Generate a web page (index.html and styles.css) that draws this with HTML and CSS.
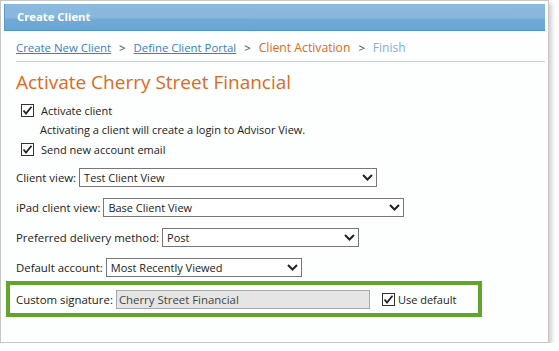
FILE: index.html
```html
<!DOCTYPE html>
<html lang="en">
<head>
    <meta charset="UTF-8">
    <title>Create Client</title>
    <link rel="stylesheet" href="styles.css">
</head>
<body>
    <div class="frame">
        <div class="header">Create Client</div>

        <div class="content">
            <div class="breadcrumb">
                <a href="#">Create New Client</a>
                <span class="sep">&gt;</span>
                <a href="#">Define Client Portal</a>
                <span class="sep">&gt;</span>
                <span class="current">Client Activation</span>
                <span class="sep">&gt;</span>
                <span class="next">Finish</span>
            </div>

            <h1>Activate Cherry Street Financial</h1>

            <div class="check-row">
                <svg class="checkbox" width="13" height="13" viewBox="0 0 13 13"><rect x="0.5" y="0.5" width="12" height="12" fill="#fff" stroke="#333"/><path d="M2.5 6.5 L5 9.5 L10.5 2.8" fill="none" stroke="#222" stroke-width="1.8"/></svg>
                <span>Activate client</span>
            </div>
            <div class="note">Activating a client will create a login to Advisor View.</div>
            <div class="check-row">
                <svg class="checkbox" width="13" height="13" viewBox="0 0 13 13"><rect x="0.5" y="0.5" width="12" height="12" fill="#fff" stroke="#333"/><path d="M2.5 6.5 L5 9.5 L10.5 2.8" fill="none" stroke="#222" stroke-width="1.8"/></svg>
                <span>Send new account email</span>
            </div>

            <div class="field">
                <label>Client view:</label>
                <div class="select w-client">
                    <span>Test Client View</span>
                    <svg width="11" height="7" viewBox="0 0 11 7"><path d="M1 1 L5.5 5.5 L10 1" fill="none" stroke="#222" stroke-width="2"/></svg>
                </div>
            </div>
            <div class="field">
                <label>iPad client view:</label>
                <div class="select w-ipad">
                    <span>Base Client View</span>
                    <svg width="11" height="7" viewBox="0 0 11 7"><path d="M1 1 L5.5 5.5 L10 1" fill="none" stroke="#222" stroke-width="2"/></svg>
                </div>
            </div>
            <div class="field">
                <label>Preferred delivery method:</label>
                <div class="select w-delivery">
                    <span>Post</span>
                    <svg width="11" height="7" viewBox="0 0 11 7"><path d="M1 1 L5.5 5.5 L10 1" fill="none" stroke="#222" stroke-width="2"/></svg>
                </div>
            </div>
            <div class="field">
                <label>Default account:</label>
                <div class="select w-account">
                    <span>Most Recently Viewed</span>
                    <svg width="11" height="7" viewBox="0 0 11 7"><path d="M1 1 L5.5 5.5 L10 1" fill="none" stroke="#222" stroke-width="2"/></svg>
                </div>
            </div>

            <div class="highlight">
                <label>Custom signature:</label>
                <div class="text-input">Cherry Street Financial</div>
                <div class="use-default">
                    <svg class="checkbox" width="13" height="13" viewBox="0 0 13 13"><rect x="0.5" y="0.5" width="12" height="12" fill="#fff" stroke="#333"/><path d="M2.5 6.5 L5 9.5 L10.5 2.8" fill="none" stroke="#222" stroke-width="1.8"/></svg>
                    <span>Use default</span>
                </div>
            </div>
        </div>
    </div>
</body>
</html>
```

FILE: styles.css
```css
body {
    margin: 0;
    font-family: "Open Sans", "Noto Sans", sans-serif;
    font-size: 11px;
    color: #222;
    background: #fff;
}

.frame {
    width: 541px;
    height: 335px;
    padding: 3px;
    border: 1px solid #c6c6c6;
    background: #fdfefe;
    box-shadow: 3px 3px 4px rgba(0, 0, 0, 0.18);
}

.header {
    height: 26px;
    line-height: 26px;
    padding-left: 12px;
    color: #fff;
    font-weight: bold;
    font-size: 11.3px;
    border-left: 1px solid #5b9bd0;
    border-bottom: 1px solid #4f95cc;
    background: linear-gradient(#8cbade 0, #88b7dc 52%, #72aad5 60%, #6aa5d2 100%);
}

.content {
    padding: 0 0 0 12px;
}

.breadcrumb {
    margin-top: 9px;
    padding-bottom: 5px;
    border-bottom: 1px solid #cfcfcf;
    font-size: 11.4px;
    line-height: 16px;
}

.breadcrumb a {
    color: #3a80c9;
}

.breadcrumb .sep {
    margin: 0 5px;
    color: #444;
}

.breadcrumb .current {
    color: #e0691b;
    font-size: 12.2px;
}

.breadcrumb .next {
    color: #7cb0e3;
    font-size: 12px;
}

h1 {
    margin: 8px 0 6px;
    font-size: 19px;
    font-weight: normal;
    line-height: 24px;
    color: #e0691b;
}

.check-row {
    display: flex;
    align-items: center;
    height: 20px;
    padding-left: 5px;
}

.check-row .checkbox {
    margin-right: 7px;
}

.note {
    height: 19px;
    line-height: 19px;
    padding-left: 24px;
}

.field {
    display: flex;
    align-items: center;
    margin-top: 11px;
    height: 19px;
}

.check-row + .field {
    margin-top: 9px;
}

.field label,
.highlight label {
    font-size: 11.4px;
    margin-right: 3px;
}

.select {
    display: flex;
    align-items: center;
    justify-content: space-between;
    box-sizing: border-box;
    height: 19px;
    padding: 0 3px 0 4px;
    border: 1px solid #777;
    background: #fff;
}

.w-client { width: 298px; }
.w-ipad { width: 301px; }
.w-delivery { width: 197px; }
.w-account { width: 196px; }

.highlight {
    display: flex;
    align-items: center;
    width: 462px;
    height: 28px;
    margin: 4px 0 0 -10px;
    padding-left: 6px;
    border: 4px solid #62a42c;
}

.text-input {
    box-sizing: border-box;
    width: 254px;
    height: 19px;
    line-height: 17px;
    padding-left: 2px;
    border: 1px solid #a8a8a8;
    background: #e5e5e5;
    color: #444;
    font-size: 11.4px;
}

.use-default {
    display: flex;
    align-items: center;
    margin-left: 12px;
}

.use-default .checkbox {
    margin-right: 3px;
}
```
